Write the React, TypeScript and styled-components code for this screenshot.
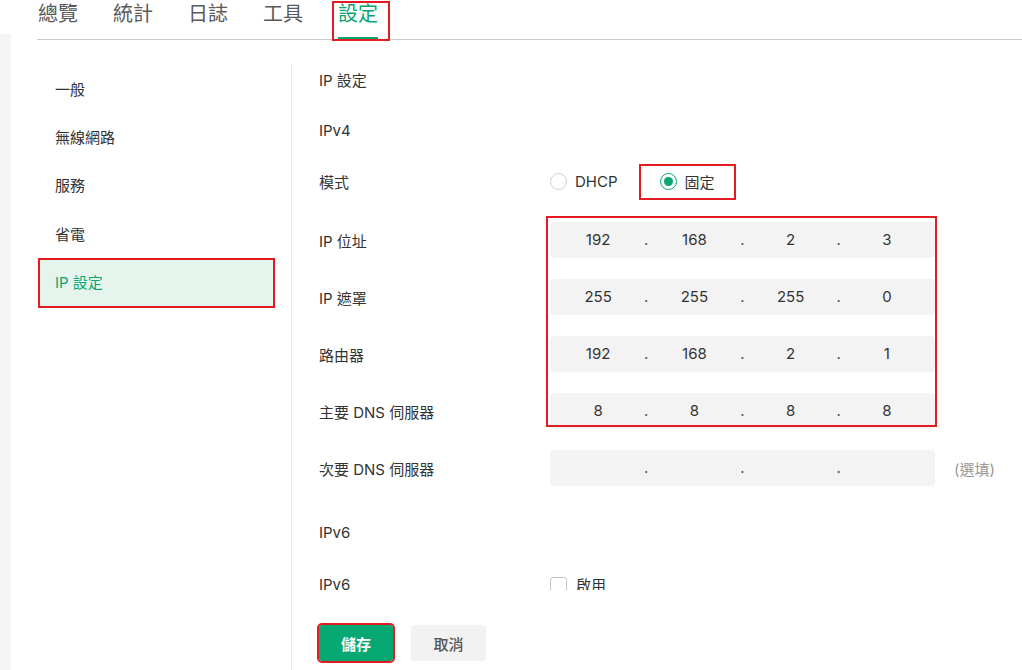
import React from 'react'
import styled, { createGlobalStyle, css } from 'styled-components'

const GREEN = '#0aa573'
const RED = '#e31c23'

const GlobalStyle = createGlobalStyle`
    * { box-sizing: border-box; }
    html, body {
        margin: 0;
        background: #fff;
    }
    body {
        font-family: Inter, "Noto Sans CJK TC", sans-serif;
        color: #333;
    }
`

const tabs = ['總覽', '統計', '日誌', '工具', '設定']
const menu = ['一般', '無線網路', '服務', '省電', 'IP 設定']
const fields = [
    { label: 'IP 位址', value: ['192', '168', '2', '3'] },
    { label: 'IP 遮罩', value: ['255', '255', '255', '0'] },
    { label: '路由器', value: ['192', '168', '2', '1'] },
    { label: '主要 DNS 伺服器', value: ['8', '8', '8', '8'] },
]

const IpInput = ({ value }: { value: string[] }) => (
    <SIpBox>
        {value.map((part, i) => (
            <React.Fragment key={i}>
                {i > 0 && <SDot>.</SDot>}
                <SSegment>{part}</SSegment>
            </React.Fragment>
        ))}
    </SIpBox>
)

export default function App() {
    return (
        <>
            <GlobalStyle />
            <SPage>
                <SStrip />
                <SMain>
                    <STabBar>
                        {tabs.map((t) => (
                            <STab key={t} $active={t === '設定'}>
                                {t}
                            </STab>
                        ))}
                    </STabBar>
                    <SBody>
                        <SSidebar>
                            {menu.map((m) => (
                                <SMenuItem key={m} $active={m === 'IP 設定'}>
                                    {m}
                                </SMenuItem>
                            ))}
                        </SSidebar>
                        <SContent>
                            <SScroll>
                                <STitle>IP 設定</STitle>
                                <SSection $gap={17}>IPv4</SSection>
                                <SRow $gap={14.5}>
                                    <SLabel>模式</SLabel>
                                    <SRadioGroup>
                                        <SRadioOption>
                                            <SRadio />
                                            DHCP
                                        </SRadioOption>
                                        <SRadioOption $marked>
                                            <SRadio $checked />
                                            固定
                                        </SRadioOption>
                                    </SRadioGroup>
                                </SRow>
                                <SFieldGroup>
                                    {fields.map((f, i) => (
                                        <SRow key={f.label} $gap={i === 0 ? 22.5 : 21}>
                                            <SLabel>{f.label}</SLabel>
                                            <IpInput value={f.value} />
                                        </SRow>
                                    ))}
                                    <SGroupRing />
                                </SFieldGroup>
                                <SRow $gap={21}>
                                    <SLabel>次要 DNS 伺服器</SLabel>
                                    <IpInput value={['', '', '', '']} />
                                    <SHint>(選填)</SHint>
                                </SRow>
                                <SSection $gap={29}>IPv6</SSection>
                                <SRow $gap={15}>
                                    <SLabel>IPv6</SLabel>
                                    <SCheckLabel>
                                        <SCheckbox />
                                        啟用
                                    </SCheckLabel>
                                </SRow>
                            </SScroll>
                            <SFooter>
                                <SButton $primary>儲存</SButton>
                                <SButton>取消</SButton>
                            </SFooter>
                        </SContent>
                    </SBody>
                </SMain>
            </SPage>
        </>
    )
}

const SPage = styled.div`
    display: flex;
    height: 670px;
    overflow: hidden;
`
const SStrip = styled.div`
    width: 11px;
    flex-shrink: 0;
    margin-top: 34px;
    background: #f5f5f5;
`
const SMain = styled.div`
    flex: 1;
    min-width: 0;
    margin-left: 26px;
    display: flex;
    flex-direction: column;
`
const STabBar = styled.div`
    display: flex;
    gap: 35px;
    height: 40px;
    padding-left: 1px;
    border-bottom: 1px solid #cbcbcb;
`
const STab = styled.div<{ $active?: boolean }>`
    position: relative;
    height: 39px;
    font-size: 20px;
    line-height: 29px;
    color: ${(p) => (p.$active ? GREEN : '#5a5a5a')};

    ${(p) =>
        p.$active &&
        css`
            &::after {
                content: '';
                position: absolute;
                left: 0;
                right: 0;
                bottom: 0;
                height: 2px;
                background: ${GREEN};
            }
            &::before {
                content: '';
                position: absolute;
                left: -6px;
                right: -12px;
                top: 1px;
                bottom: -2px;
                border: 2px solid ${RED};
            }
        `}
`
const SBody = styled.div`
    flex: 1;
    min-height: 0;
    display: flex;
    padding-top: 24px;
    padding-left: 3px;
`
const SSidebar = styled.div`
    width: 252px;
    flex-shrink: 0;
    padding-top: 2.5px;
    padding-right: 18px;
    border-right: 1px solid #e8e8e8;
    display: flex;
    flex-direction: column;
    gap: 2.4px;
`
const SMenuItem = styled.div<{ $active?: boolean }>`
    height: 46px;
    padding-left: 15px;
    padding-bottom: 3px;
    display: flex;
    align-items: center;
    font-size: 15px;
    color: ${(p) => (p.$active ? GREEN : '#333')};
    background: ${(p) => (p.$active ? '#e5f5ee' : 'transparent')};
    outline: ${(p) => (p.$active ? `2px solid ${RED}` : 'none')};
`
const SContent = styled.div`
    flex: 1;
    min-width: 0;
    padding-top: 1px;
    padding-left: 27px;
    display: flex;
    flex-direction: column;
`
const SScroll = styled.div`
    height: 525px;
    overflow: hidden;
    display: flex;
    flex-direction: column;
`
const STitle = styled.div`
    height: 31px;
    line-height: 31px;
    font-size: 15px;
    color: #333;
`
const SSection = styled.div<{ $gap: number }>`
    margin-top: ${(p) => p.$gap}px;
    height: 36px;
    line-height: 36px;
    font-size: 15px;
    color: #333;
    flex-shrink: 0;
`
const SRow = styled.div<{ $gap: number }>`
    margin-top: ${(p) => p.$gap}px;
    height: 36px;
    flex-shrink: 0;
    display: flex;
    align-items: center;
    font-size: 15px;
`
const SLabel = styled.div`
    width: 231px;
    flex-shrink: 0;
    color: #333;
`
const SRadioGroup = styled.div`
    display: flex;
    gap: 42px;
    height: 36px;
`
const SRadioOption = styled.label<{ $marked?: boolean }>`
    position: relative;
    display: flex;
    align-items: center;
    gap: 8px;
    color: #333;

    ${(p) =>
        p.$marked &&
        css`
            &::after {
                content: '';
                position: absolute;
                left: -21px;
                right: -21px;
                top: 0;
                bottom: 0;
                border: 2px solid ${RED};
            }
        `}
`
const SRadio = styled.span<{ $checked?: boolean }>`
    width: 17px;
    height: 17px;
    border-radius: 50%;
    border: ${(p) => (p.$checked ? `1.5px solid ${GREEN}` : '1px solid #cfcfcf')};
    display: flex;
    align-items: center;
    justify-content: center;

    &::after {
        content: '';
        width: 9px;
        height: 9px;
        border-radius: 50%;
        background: ${(p) => (p.$checked ? GREEN : 'transparent')};
    }
`
const SFieldGroup = styled.div`
    position: relative;
    display: flex;
    flex-direction: column;
`
const SGroupRing = styled.div`
    position: absolute;
    left: 227px;
    top: 16.5px;
    width: 391px;
    height: 211px;
    border: 2px solid ${RED};
    pointer-events: none;
`
const SIpBox = styled.div`
    width: 385px;
    height: 36px;
    flex-shrink: 0;
    display: flex;
    background: #f3f3f3;
    border-radius: 4px;
    font-size: 15px;
    line-height: 36px;
    color: #333;
`
const SSegment = styled.div`
    flex: 1;
    text-align: center;
`
const SDot = styled.div`
    width: 0;
    display: flex;
    justify-content: center;
    color: #555;
`
const SHint = styled.div`
    margin-left: 19px;
    color: #999;
`
const SCheckLabel = styled.label`
    display: flex;
    align-items: center;
    gap: 9px;
    color: #333;
`
const SCheckbox = styled.span`
    width: 17px;
    height: 17px;
    border: 1px solid #c4c4c4;
    border-radius: 3px;
    margin-top: 3px;
`
const SFooter = styled.div`
    display: flex;
    gap: 18px;
    padding-top: 35px;
`
const SButton = styled.button<{ $primary?: boolean }>`
    width: ${(p) => (p.$primary ? 74 : 75)}px;
    height: 36px;
    border: none;
    border-radius: 3px;
    font-family: inherit;
    font-size: 15px;
    font-weight: ${(p) => (p.$primary ? 700 : 500)};
    color: ${(p) => (p.$primary ? '#fff' : '#555')};
    background: ${(p) => (p.$primary ? '#08a872' : '#f2f2f2')};
    outline: ${(p) => (p.$primary ? `2px solid ${RED}` : 'none')};
`
